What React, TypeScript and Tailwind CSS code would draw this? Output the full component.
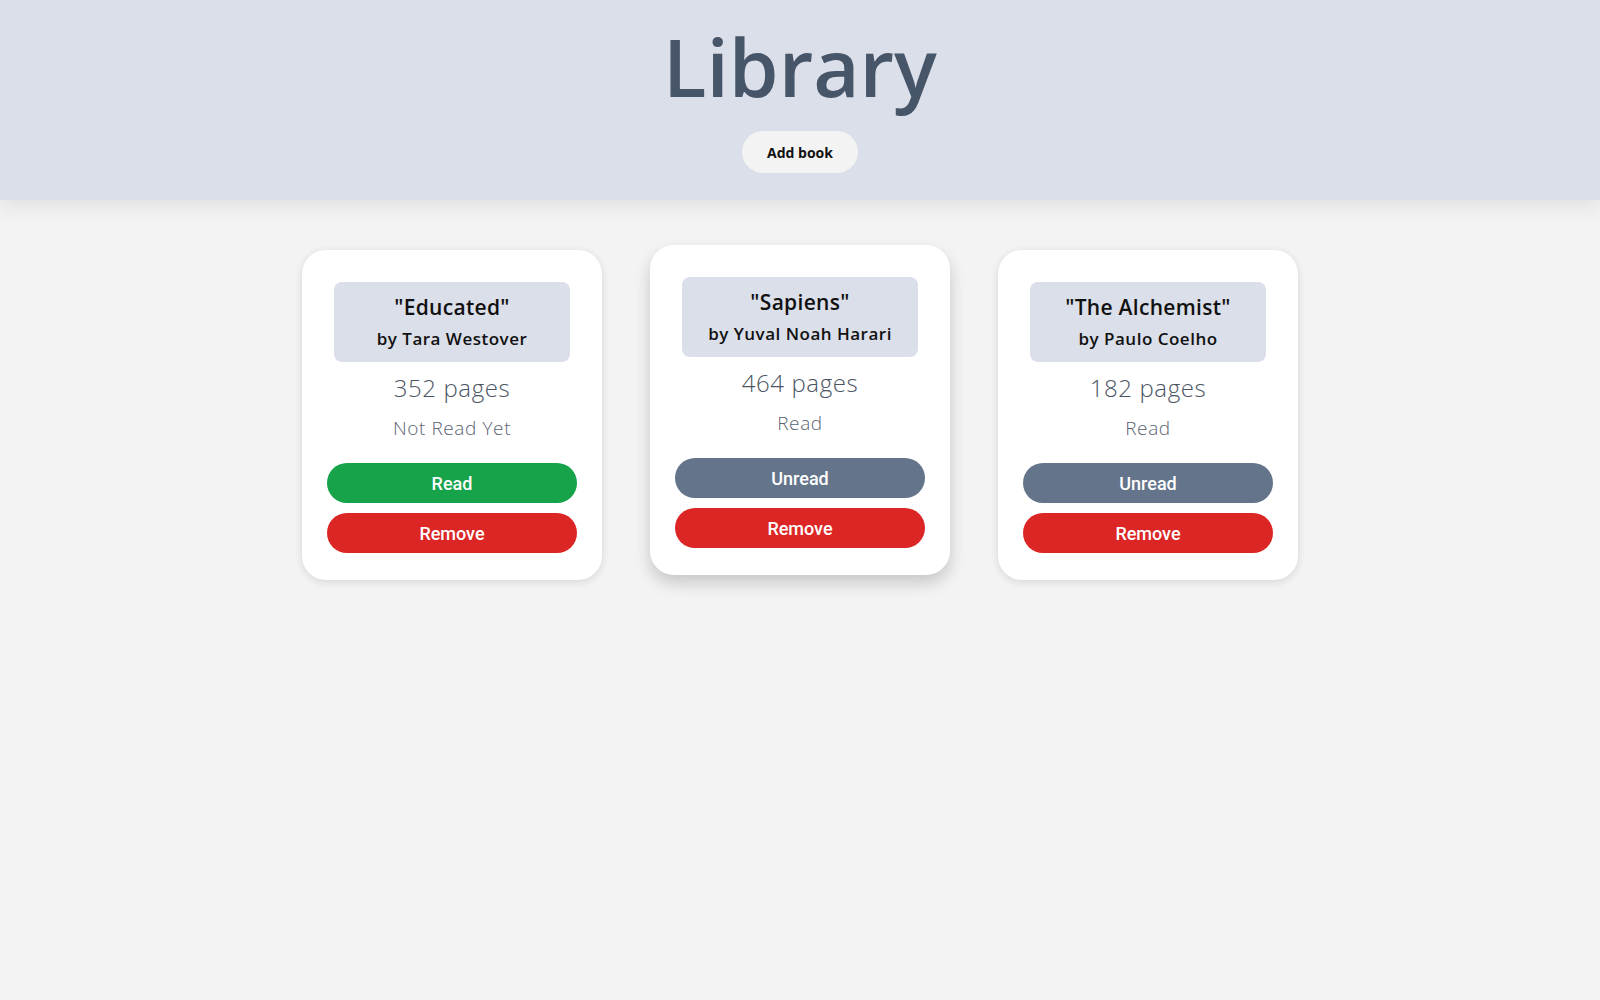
import { useState } from "react";

type Book = {
  title: string;
  author: string;
  pages: number;
  read: boolean;
};

const initial: Book[] = [
  { title: "Educated", author: "Tara Westover", pages: 352, read: false },
  { title: "Sapiens", author: "Yuval Noah Harari", pages: 464, read: true },
  { title: "The Alchemist", author: "Paulo Coelho", pages: 182, read: true },
];

const round = { fontFamily: "'Open Sans', 'Noto Sans', sans-serif" };
const btnFont = { fontFamily: "Roboto, 'Liberation Sans', sans-serif" };

function BookCard({
  book,
  lifted,
  onToggle,
  onRemove,
}: {
  book: Book;
  lifted: boolean;
  onToggle: () => void;
  onRemove: () => void;
}) {
  return (
    <div
      className={
        lifted
          ? "flex w-[300px] -translate-y-[5px] flex-col items-center rounded-[24px] bg-white px-[25px] pt-8 pb-[27px] shadow-[0_8px_16px_rgba(0,0,0,0.18)]"
          : "flex w-[300px] flex-col items-center rounded-[24px] bg-white px-[25px] pt-8 pb-[27px] shadow-[0_2px_8px_rgba(0,0,0,0.12)]"
      }
    >
      {/* title block */}
      <div className="flex h-[80px] w-[236px] flex-col items-center rounded-lg bg-[#dbdfe9] pt-[11px] text-[#111]">
        <div className="text-[21px] font-semibold leading-7 tracking-[0.3px]">
          "{book.title}"
        </div>
        <div className="mt-[6px] text-[17px] font-semibold leading-6 tracking-[0.5px]">
          by {book.author}
        </div>
      </div>
      <div className="mt-[10px] text-[24px] font-light leading-8 tracking-[0.6px] text-[#4b5563]">
        {book.pages} pages
      </div>
      <div className="mt-[10px] text-[19px] font-light leading-7 tracking-[0.6px] text-[#5b6472]">
        {book.read ? "Read" : "Not Read Yet"}
      </div>
      <button
        onClick={onToggle}
        style={btnFont}
        className={
          book.read
            ? "mt-[21px] h-10 w-[250px] rounded-full bg-[#64748b] text-[18px] font-medium text-white"
            : "mt-[21px] h-10 w-[250px] rounded-full bg-[#16a34a] text-[18px] font-medium text-white"
        }
      >
        {book.read ? "Unread" : "Read"}
      </button>
      <button
        onClick={onRemove}
        style={btnFont}
        className="mt-[10px] h-10 w-[250px] rounded-full bg-[#dc2626] text-[18px] font-medium text-white"
      >
        Remove
      </button>
    </div>
  );
}

export default function App() {
  const [books, setBooks] = useState(initial);

  return (
    <div className="min-h-screen bg-[#f3f3f3]" style={round}>
      <header className="relative flex h-[200px] flex-col items-center bg-[#dbdfe9] pt-4 shadow-[0_6px_20px_rgba(0,0,0,0.08)]">
        <h1 className="text-[80px] font-semibold leading-[100px] text-[#475569]">
          Library
        </h1>
        <button className="mt-[15px] h-[42px] w-[116px] rounded-full bg-[#f3f3f3] text-[14px] font-bold text-[#111]">
          Add book
        </button>
      </header>

      <main className="flex justify-center gap-12 pt-[50px]">
        {books.map((b, i) => (
          <BookCard
            key={b.title}
            book={b}
            lifted={i === 1}
            onToggle={() =>
              setBooks((list) =>
                list.map((x, j) => (j === i ? { ...x, read: !x.read } : x))
              )
            }
            onRemove={() => setBooks((list) => list.filter((_, j) => j !== i))}
          />
        ))}
      </main>
    </div>
  );
}
